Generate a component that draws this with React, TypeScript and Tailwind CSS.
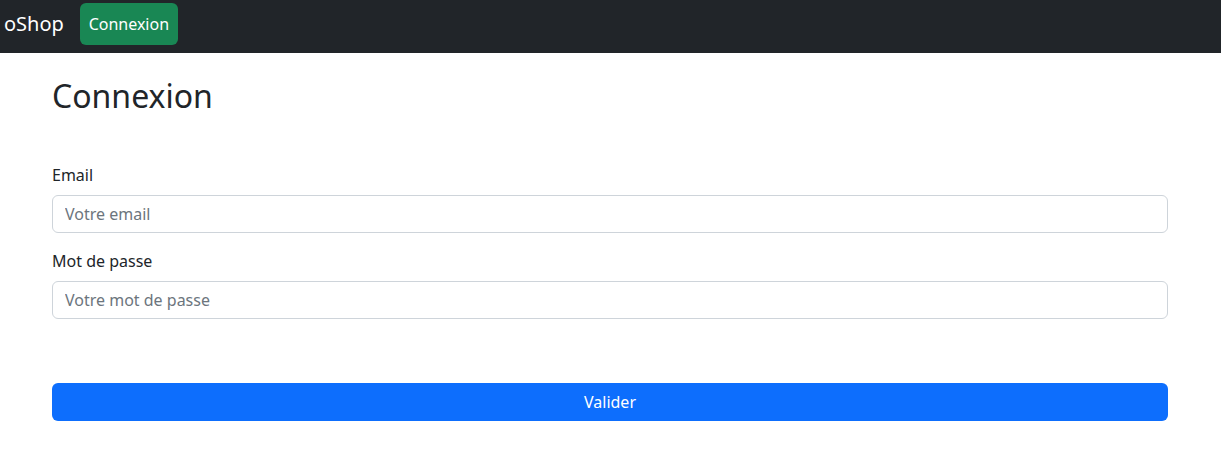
export default function App() {
  return (
    <div className="min-h-[460px] bg-white text-[#212529] font-['Noto_Sans',sans-serif]">
      <nav className="flex h-[53px] items-center bg-[#212529] pb-[6px] pl-[4px]">
        <a href="#" className="mr-4 text-[20px] leading-[30px] text-white">
          oShop
        </a>
        <button
          type="button"
          className="flex h-[42px] w-[98px] items-center justify-center rounded-[6px] bg-[#198754] text-[16px] leading-6 text-white"
        >
          Connexion
        </button>
      </nav>

      <main className="ml-[40px] w-[1140px] px-3">
        <h1 className="mt-6 mb-2 text-[32px] leading-[38.4px] font-normal">
          Connexion
        </h1>

        <form className="mt-12" onSubmit={(e) => e.preventDefault()}>
          <div className="mb-4">
            <label htmlFor="email" className="mb-2 block text-[16px] leading-6">
              Email
            </label>
            <input
              id="email"
              type="email"
              placeholder="Votre email"
              className="block h-[38px] w-full rounded-[6px] border border-[#ced4da] px-3 text-[16px] outline-none placeholder:text-[#6c757d]"
            />
          </div>
          <div className="mb-4">
            <label htmlFor="password" className="mb-2 block text-[16px] leading-6">
              Mot de passe
            </label>
            <input
              id="password"
              type="password"
              placeholder="Votre mot de passe"
              className="block h-[38px] w-full rounded-[6px] border border-[#ced4da] px-3 text-[16px] outline-none placeholder:text-[#6c757d]"
            />
          </div>
          <button
            type="submit"
            className="mt-16 block h-[38px] w-full rounded-[6px] bg-[#0d6efd] text-[16px] text-white"
          >
            Valider
          </button>
        </form>
      </main>
    </div>
  )
}
